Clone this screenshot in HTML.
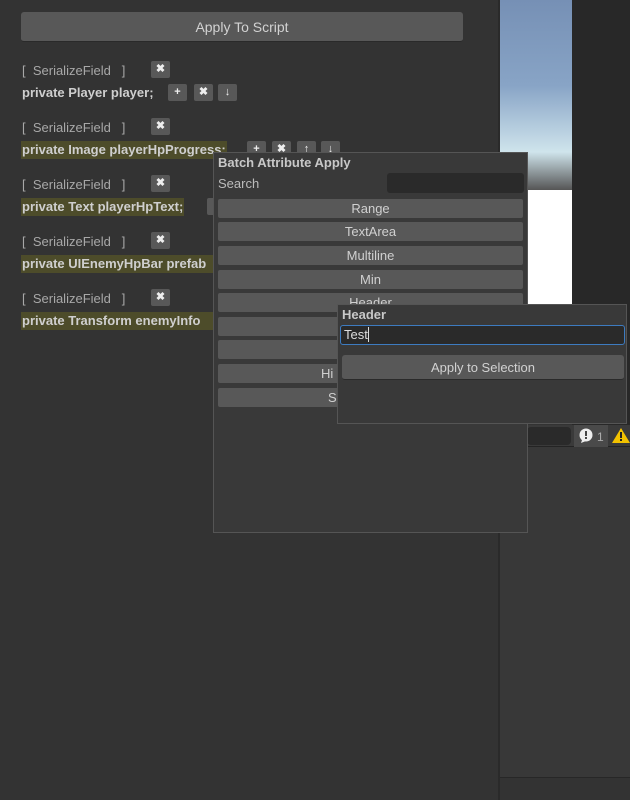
<!DOCTYPE html>
<html><head><meta charset="utf-8"><style>
*{margin:0;padding:0;box-sizing:border-box}
body{width:630px;height:800px;overflow:hidden;background:#333;font-family:"Liberation Sans",sans-serif;font-size:13px;color:#c4c4c4;position:relative}
.a{position:absolute}
.btn{position:absolute;background:#585858;border-radius:3px;color:#d2d2d2;text-align:center;border-bottom:1px solid #2a2a2a}
.ic{position:absolute;width:19px;height:17px;background:#585858;border-radius:2px;color:#eee;font-size:11px;text-align:center;line-height:17px;font-weight:bold}
.sf{position:absolute;left:22px;color:#a8a8a8;font-size:13px}
.fld{position:absolute;left:21px;font-weight:bold;color:#cfcfcf;font-size:13px;padding:1px 1px;height:18px;line-height:16px}
.hl{background:#4d4c2a}
.lb{position:absolute;left:218px;width:305px;height:19px;background:#585858;border-radius:2px;text-align:center;color:#d0d0d0;line-height:19px;font-size:13px}
</style></head><body>
<div class="a" style="left:498px;top:0;width:74px;height:190px;background:linear-gradient(#7690b5 0%,#88a4c6 45%,#cfe4ec 80%,#555 100%)"></div>
<div class="a" style="left:498px;top:190px;width:74px;height:115px;background:#fff"></div>
<div class="a" style="left:572px;top:0;width:58px;height:430px;background:#282828"></div>
<div class="a" style="left:498px;top:0;width:2px;height:800px;background:#2a2a2a"></div>
<div class="a" style="left:500px;top:425px;width:130px;height:22px;background:#3a3a3a;border-bottom:1px solid #242424"></div>
<div class="a" style="left:527px;top:427px;width:44px;height:18px;background:#2a2a2a;border-radius:4px"></div>
<div class="a" style="left:574px;top:425px;width:34px;height:22px;background:#4a4a4a"></div>
<svg class="a" style="left:578px;top:427px" width="30" height="18"><circle cx="8" cy="8" r="6.5" fill="#eee"/><path d="M4 13 L3 16 L8 14Z" fill="#eee"/><rect x="7" y="4" width="2" height="5" fill="#444"/><rect x="7" y="10" width="2" height="2" fill="#444"/><text x="19" y="14" font-size="12" fill="#aaa" font-family="Liberation Sans">1</text></svg>
<svg class="a" style="left:612px;top:427px" width="18" height="18"><path d="M9 1 L18 16 L0 16Z" fill="#f2c200"/><rect x="8" y="5" width="2" height="6" fill="#222"/><rect x="8" y="12" width="2" height="2" fill="#222"/></svg>
<div class="a" style="left:500px;top:447px;width:130px;height:330px;background:#383838"></div>
<div class="a" style="left:500px;top:777px;width:130px;height:1px;background:#272727"></div>

<div class="btn" style="left:21px;top:12px;width:442px;height:30px;line-height:30px;font-size:14px">Apply To Script</div>

<div class="sf" style="top:63px">[&nbsp;&nbsp;SerializeField&nbsp;&nbsp;&nbsp;]</div><div class="ic" style="left:151px;top:61px">✖</div>
<div class="fld" style="top:84px">private Player player;</div>
<div class="ic" style="left:168px;top:84px">+</div><div class="ic" style="left:194px;top:84px">✖</div><div class="ic" style="left:218px;top:84px">↓</div>

<div class="sf" style="top:120px">[&nbsp;&nbsp;SerializeField&nbsp;&nbsp;&nbsp;]</div><div class="ic" style="left:151px;top:118px">✖</div>
<div class="fld hl" style="top:141px">private Image playerHpProgress;</div>
<div class="ic" style="left:247px;top:141px">+</div><div class="ic" style="left:272px;top:141px">✖</div><div class="ic" style="left:297px;top:141px">↑</div><div class="ic" style="left:321px;top:141px">↓</div>

<div class="sf" style="top:177px">[&nbsp;&nbsp;SerializeField&nbsp;&nbsp;&nbsp;]</div><div class="ic" style="left:151px;top:175px">✖</div>
<div class="fld hl" style="top:198px">private Text playerHpText;</div>
<div class="ic" style="left:207px;top:198px">+</div>

<div class="sf" style="top:234px">[&nbsp;&nbsp;SerializeField&nbsp;&nbsp;&nbsp;]</div><div class="ic" style="left:151px;top:232px">✖</div>
<div class="fld hl" style="top:255px;width:195px;overflow:hidden;white-space:nowrap">private UIEnemyHpBar prefab</div>

<div class="sf" style="top:291px">[&nbsp;&nbsp;SerializeField&nbsp;&nbsp;&nbsp;]</div><div class="ic" style="left:151px;top:289px">✖</div>
<div class="fld hl" style="top:312px;width:195px;overflow:hidden;white-space:nowrap">private Transform enemyInfo</div>

<div class="a" style="left:213px;top:152px;width:315px;height:381px;background:#393939;border:1px solid #555"></div>
<div class="a" style="left:218px;top:155px;font-weight:bold;color:#c8c8c8">Batch Attribute Apply</div>
<div class="a" style="left:218px;top:176px;color:#bbb">Search</div>
<div class="a" style="left:387px;top:173px;width:137px;height:20px;background:#2a2a2a;border-radius:3px"></div>
<div class="lb" style="top:199px">Range</div>
<div class="lb" style="top:222px">TextArea</div>
<div class="lb" style="top:246px">Multiline</div>
<div class="lb" style="top:270px">Min</div>
<div class="lb" style="top:293px">Header</div>
<div class="lb" style="top:317px"></div>
<div class="lb" style="top:340px"></div>
<div class="lb" style="top:364px;text-align:left;padding-left:103px">Hi</div>
<div class="lb" style="top:388px;text-align:left;padding-left:110px">S</div>

<div class="a" style="left:337px;top:304px;width:290px;height:120px;background:#393939;border:1px solid #555"></div>
<div class="a" style="left:342px;top:307px;font-weight:bold;color:#c8c8c8">Header</div>
<div class="a" style="left:340px;top:325px;width:285px;height:20px;background:#2a2a2a;border:1px solid #3d7bc0;border-radius:3px;color:#ddd;padding-left:3px;line-height:18px">Test<span style="border-left:1px solid #ddd"></span></div>
<div class="btn" style="left:342px;top:355px;width:282px;height:25px;line-height:25px">Apply to Selection</div>
</body></html>
